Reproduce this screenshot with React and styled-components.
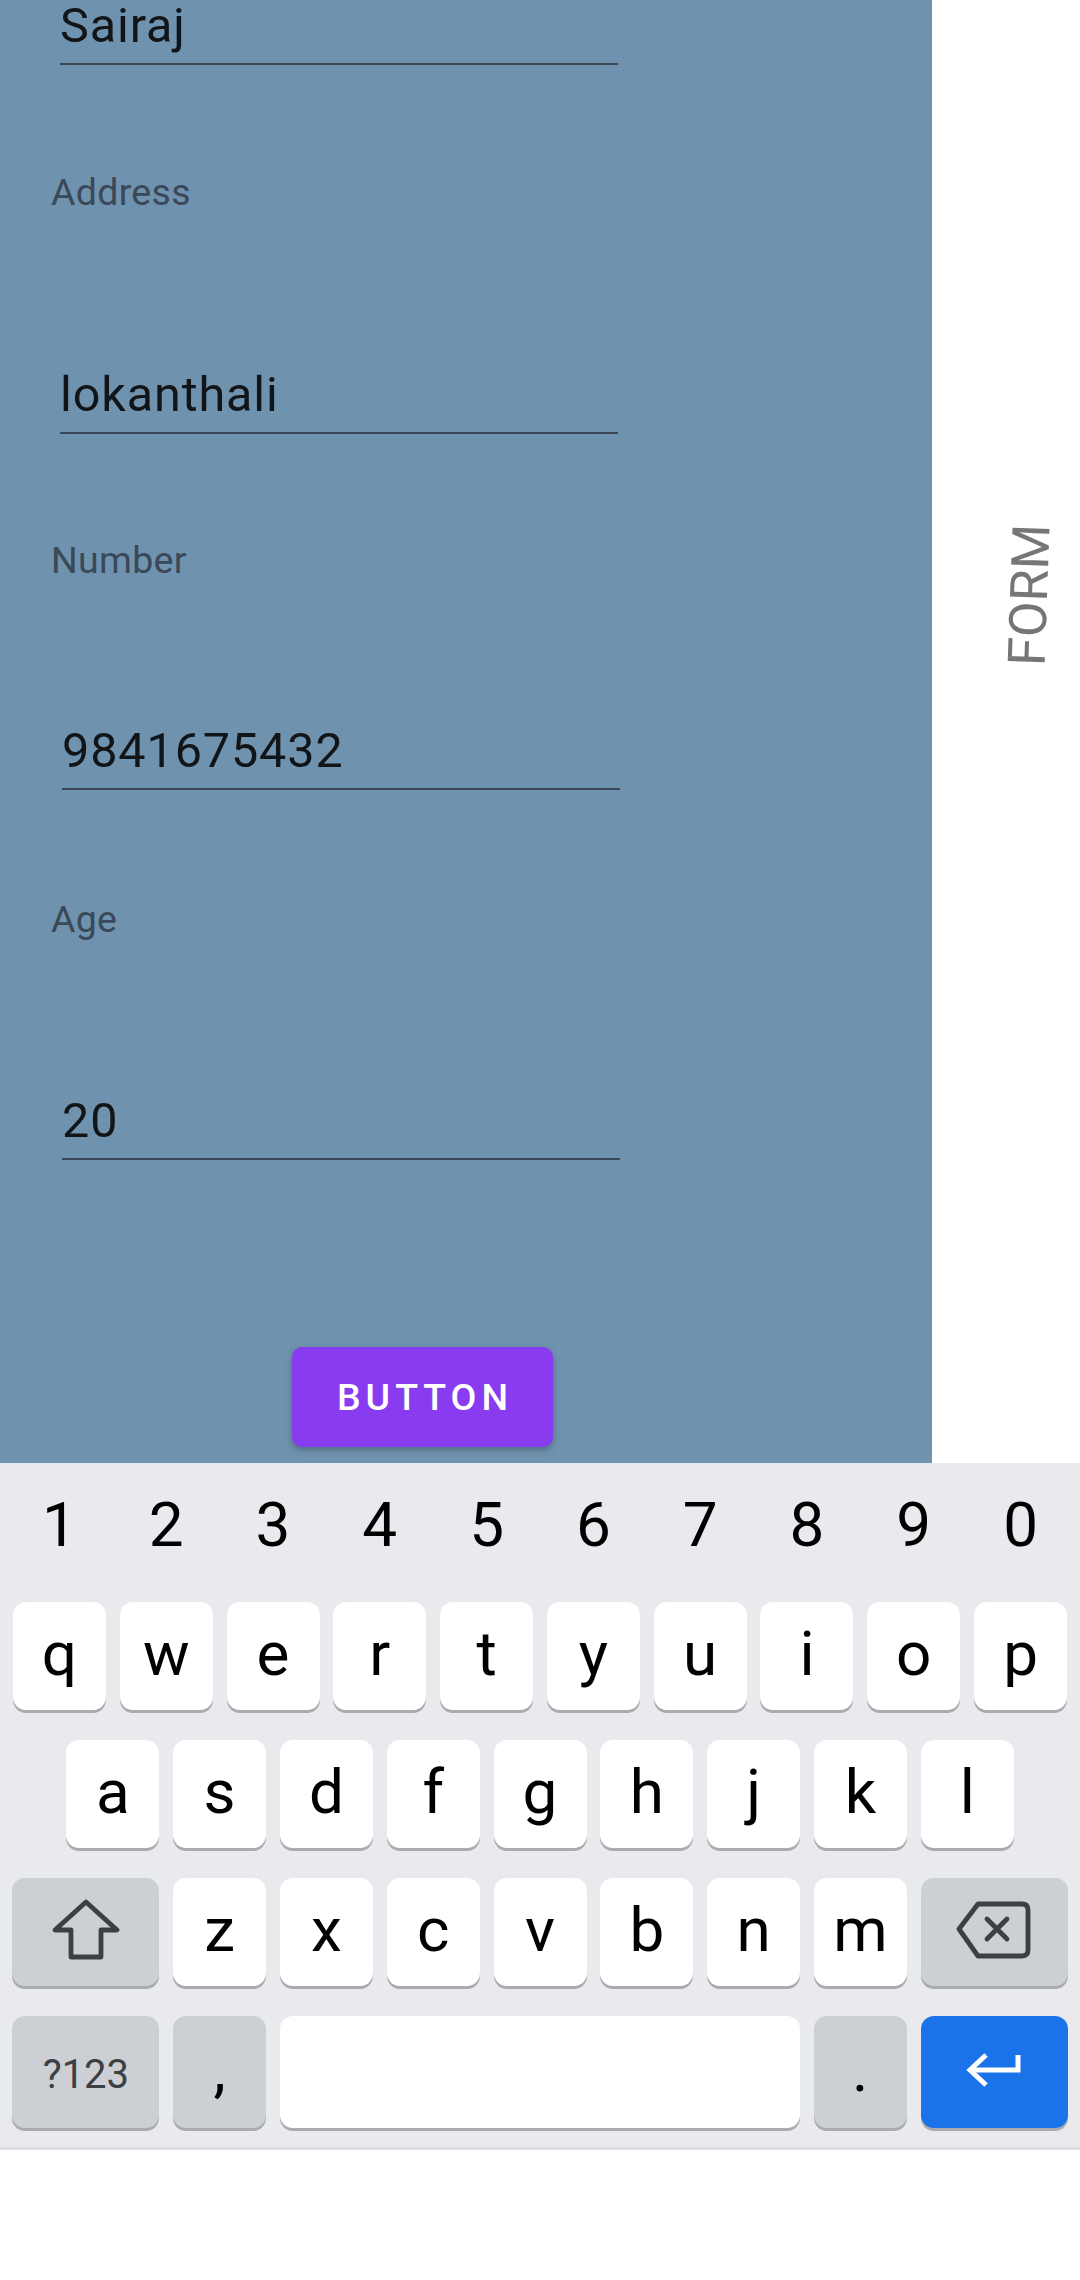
import React from 'react';
import styled, { createGlobalStyle } from 'styled-components';

const GlobalStyle = createGlobalStyle`
  html, body {
    margin: 0;
    padding: 0;
    background: #ffffff;
  }
  * {
    box-sizing: border-box;
  }
`;

const FONT = `Roboto, 'Liberation Sans', sans-serif`;

const fields = [
  { label: 'Address', value: 'lokanthali', top: 106, gap: 154, x: 0 },
  { label: 'Number', value: '9841675432', top: 105, gap: 142, x: 2 },
  { label: 'Age', value: '20', top: 108, gap: 153, x: 2 },
];

const KEY_W = 93;
const WIDE_W = 147;

const Shift = () => (
  <svg width="68" height="62" viewBox="0 0 68 62" fill="none">
    <path
      d="M34 3 L65 31 H49 V58 H19 V31 H3 Z"
      stroke="#3c4043"
      strokeWidth="4.8"
      strokeLinejoin="round"
    />
  </svg>
);

const Backspace = () => (
  <svg width="76" height="58" viewBox="0 0 76 58" fill="none">
    <path
      d="M3 28 L22 3 H66 Q72 3 72 9 V49 Q72 55 66 55 H22 Z"
      stroke="#3c4043"
      strokeWidth="4.8"
      strokeLinejoin="round"
    />
    <path d="M31 18 L51 38 M51 18 L31 38" stroke="#3c4043" strokeWidth="4.8" strokeLinecap="round" />
  </svg>
);

const Enter = () => (
  <svg width="58" height="36" viewBox="0 0 58 36" fill="none">
    <path d="M6 18 H53 V3" stroke="#ffffff" strokeWidth="5" />
    <path d="M21 3 L5 18 L21 33" stroke="#ffffff" strokeWidth="5" />
  </svg>
);

const App = () => {
  return (
    <>
      <GlobalStyle />
      <Page>
        <Top>
          <FormPanel>
            <Input readOnly defaultValue="Sairaj" $first />
            {fields.map((f) => (
              <Field key={f.label} $top={f.top}>
                <Label>{f.label}</Label>
                <Input readOnly defaultValue={f.value} $gap={f.gap} $x={f.x} />
              </Field>
            ))}
            <Button>Button</Button>
          </FormPanel>
          <SideColumn>
            <SideTitle>FORM</SideTitle>
          </SideColumn>
        </Top>

        <Keyboard>
          <NumberRow>
            {'1234567890'.split('').map((d) => (
              <Digit key={d}>{d}</Digit>
            ))}
          </NumberRow>
          <KeyRows>
            <KeyRow>
              {'qwertyuiop'.split('').map((k) => (
                <Key key={k}>{k}</Key>
              ))}
            </KeyRow>
            <KeyRow>
              {'asdfghjkl'.split('').map((k) => (
                <Key key={k}>{k}</Key>
              ))}
            </KeyRow>
            <KeyRow>
              <Key $w={WIDE_W} $kind="fn">
                <Shift />
              </Key>
              {'zxcvbnm'.split('').map((k) => (
                <Key key={k}>{k}</Key>
              ))}
              <Key $w={WIDE_W} $kind="fn">
                <Backspace />
              </Key>
            </KeyRow>
            <KeyRow>
              <Key $w={WIDE_W} $kind="fn" $tall>
                <SymbolLabel>?123</SymbolLabel>
              </Key>
              <Key $kind="fn" $tall>
                ,
              </Key>
              <Key $w={520} $tall />
              <Key $kind="fn" $tall>
                .
              </Key>
              <Key $w={WIDE_W} $kind="enter" $tall>
                <Enter />
              </Key>
            </KeyRow>
          </KeyRows>
        </Keyboard>
      </Page>
    </>
  );
};
export default App;

const Page = styled.div`
  width: 1080px;
  height: 2280px;
  display: flex;
  flex-direction: column;
  background: #ffffff;
  font-family: ${FONT};
  overflow: hidden;
`;

const Top = styled.div`
  display: flex;
  height: 1463px;
  flex-shrink: 0;
  overflow: hidden;
`;

const FormPanel = styled.div`
  width: 932px;
  flex-shrink: 0;
  background: #6f92ae;
  display: flex;
  flex-direction: column;
  align-items: flex-start;
`;

const Field = styled.div`
  display: flex;
  flex-direction: column;
  align-items: flex-start;
  margin-top: ${(props) => props.$top}px;
`;

const Label = styled.span`
  margin-left: 51px;
  font-size: 37.5px;
  letter-spacing: 0.3px;
  line-height: 43px;
  color: #3a4858;
`;

const Input = styled.input`
  margin: ${(props) => (props.$first ? '-1px' : `${props.$gap}px`)} 0 0
    ${(props) => 60 + (props.$x || 0)}px;
  width: 558px;
  height: 66px;
  padding: 0 0 10.5px 0;
  font-family: ${FONT};
  font-size: 48.5px;
  letter-spacing: 0.9px;
  line-height: 56px;
  color: #121518;
  background: transparent;
  border: none;
  border-bottom: 2.5px solid #3a4856;
  outline: none;
`;

const Button = styled.button`
  margin: 187px 0 0 292px;
  width: 261px;
  height: 100px;
  border: none;
  border-radius: 10px;
  background: #893bf0;
  color: #ffffff;
  font-family: ${FONT};
  font-weight: 500;
  font-size: 37.5px;
  letter-spacing: 5px;
  text-indent: 5px;
  text-transform: uppercase;
  box-shadow: 0 3px 6px rgba(0, 0, 0, 0.25);
`;

const SideColumn = styled.div`
  flex: 1;
  background: #ffffff;
  display: flex;
  flex-direction: column;
  align-items: flex-start;
  padding: 524px 0 0 72px;
`;

const SideTitle = styled.span`
  writing-mode: vertical-rl;
  transform: rotate(182deg);
  font-size: 52px;
  line-height: 52px;
  color: #767676;
`;

const Keyboard = styled.div`
  height: 687px;
  flex-shrink: 0;
  background: #e8eaed;
  border-bottom: 3px solid #dcdde0;
  display: flex;
  flex-direction: column;
`;

const NumberRow = styled.div`
  height: 128px;
  display: flex;
  justify-content: center;
  gap: 13.8px;
`;

const Digit = styled.span`
  width: ${KEY_W}px;
  text-align: center;
  font-size: 62px;
  line-height: 123px;
  color: #000000;
`;

const KeyRows = styled.div`
  padding-top: 11px;
  display: flex;
  flex-direction: column;
  gap: 30px;
`;

const KeyRow = styled.div`
  display: flex;
  justify-content: center;
  gap: 13.8px;
`;

const keyBg = {
  letter: '#ffffff',
  fn: '#cccfd4',
  enter: '#1a73e8',
};

const Key = styled.div`
  width: ${(props) => props.$w || KEY_W}px;
  height: ${(props) => (props.$tall ? 112 : 108)}px;
  padding-bottom: 5px;
  border-radius: 13px;
  background: ${(props) => keyBg[props.$kind || 'letter']};
  box-shadow: 0 3px 0 #a9abae;
  display: flex;
  align-items: center;
  justify-content: center;
  font-size: 62px;
  color: #000000;
`;

const SymbolLabel = styled.span`
  font-size: 40px;
  color: #3c4043;
  padding-top: 10px;
`;
